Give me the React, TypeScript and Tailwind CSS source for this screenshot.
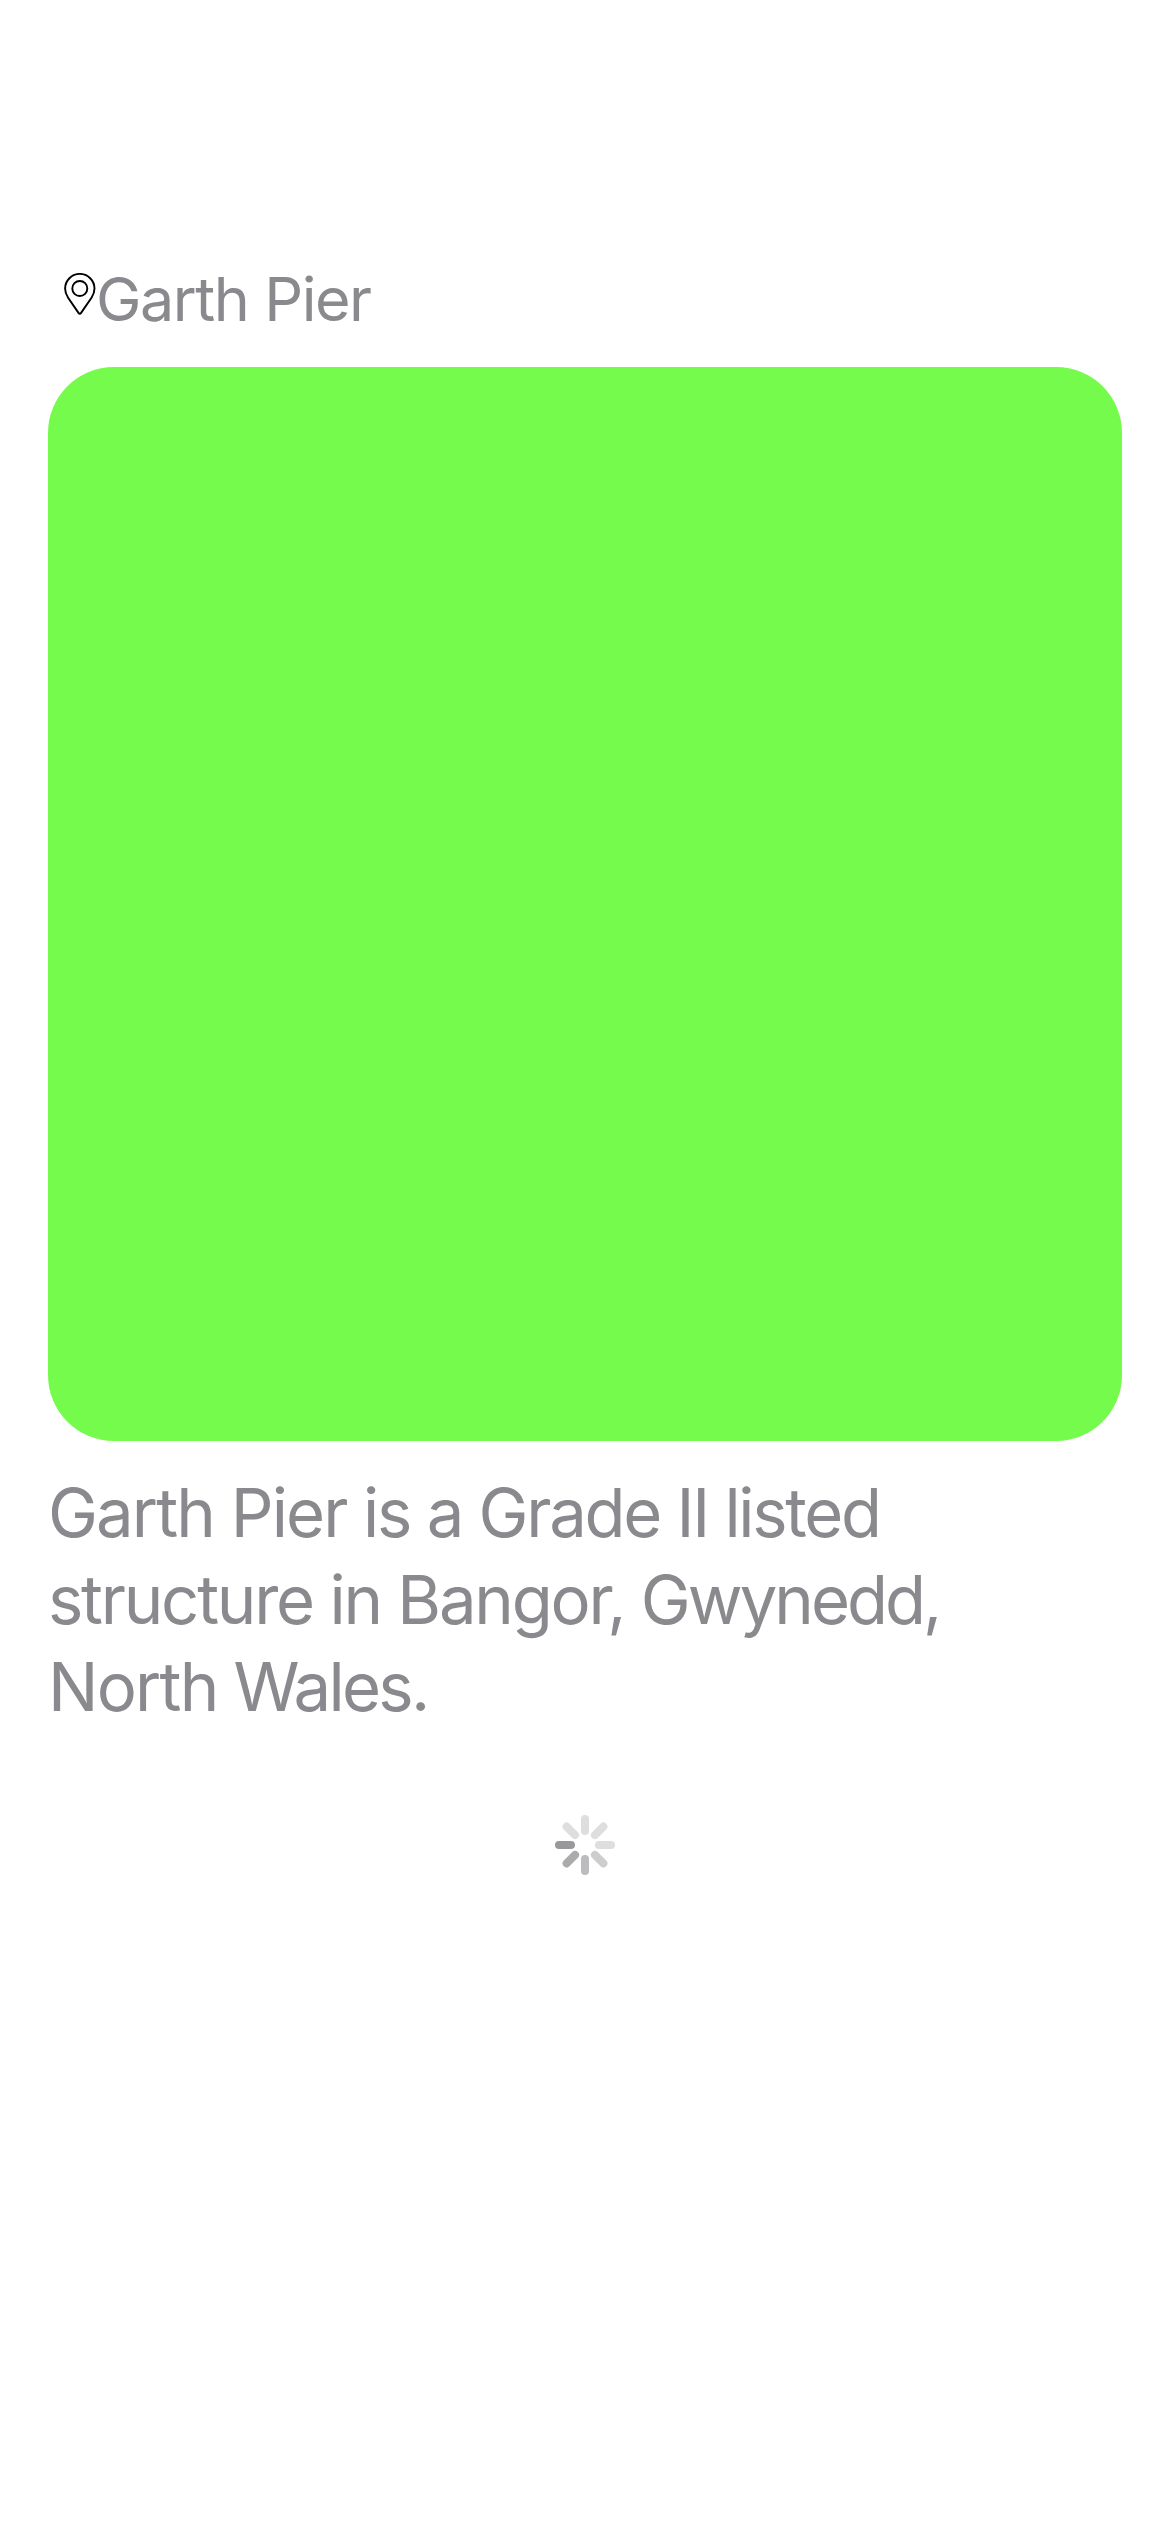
const spokes = [
  { angle: 0, color: "#dedede" },
  { angle: 45, color: "#dedede" },
  { angle: 90, color: "#dedede" },
  { angle: 135, color: "#cdcdcf" },
  { angle: 180, color: "#bcbcbe" },
  { angle: 225, color: "#ababad" },
  { angle: 270, color: "#99999b" },
  { angle: 315, color: "#dedede" },
];

function Pin() {
  return (
    <svg className="mt-3 h-[43px] w-8 shrink-0 text-black" viewBox="0 0 32 43" fill="none" stroke="currentColor" strokeWidth="1.9" strokeLinejoin="round">
      <path d="M15.8 40.800C15.300 40.800 14.900 40.500 14.500 39.900L4.100 24.700C2.200 21.900 1.100 19.200 1.100 15.600a14.700 14.700 0 0 1 29.400 0C30.500 19.200 29.400 21.900 27.500 24.700L17.100 39.900C16.700 40.500 16.300 40.800 15.800 40.800Z" />
      <circle cx="15.8" cy="15.500" r="7.500" />
    </svg>
  );
}

function Spinner() {
  return (
    <svg className="h-[60px] w-[60px]" viewBox="-30 -30 60 60" strokeWidth="8" strokeLinecap="round">
      {spokes.map(({ angle, color }) => (
        <line key={angle} x1="0" y1="-14" x2="0" y2="-26" stroke={color} transform={`rotate(${angle})`} />
      ))}
    </svg>
  );
}

export default function App() {
  return (
    <main className="flex h-[2532px] w-[1170px] flex-col bg-white px-12 pt-[261px] font-['Inter',sans-serif] font-[420] text-[#8a8a8e]">
      <header className="flex h-[106px] items-start pl-4">
        <Pin />
        <h1 className="text-[61px] leading-[76px] font-[420] tracking-[-1.45px]">Garth Pier</h1>
      </header>
      <div className="h-[1074px] w-[1074px] shrink-0 rounded-[66px] bg-[#75fb4c]" />
      <p className="mt-7 text-[67px] leading-[87px] whitespace-nowrap">
        <span className="block tracking-[-2.3px]">
          <span className="tracking-[-1.9px]">Garth Pier</span> is a Grade II listed
        </span>
        <span className="block tracking-[-2.25px]">
          structure in Bangor, <span className="tracking-[-3px]">Gwynedd,</span>
        </span>
        <span className="block tracking-[-2.7px]">
          <span className="tracking-[-1.8px]">North</span> Wales.
        </span>
      </p>
      <div className="mt-[85px] flex justify-center">
        <Spinner />
      </div>
    </main>
  );
}
